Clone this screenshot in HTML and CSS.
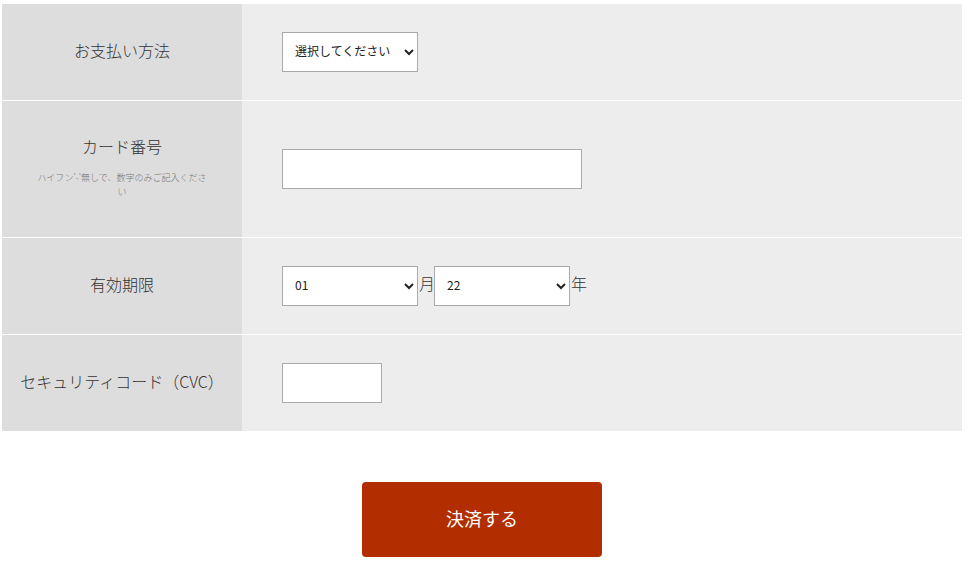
FILE: index.html
```html
<!DOCTYPE html>
<html lang="ja">
<head>
    <meta charset="UTF-8">
    <meta name="viewport" content="width=device-width, initial-scale=1.0">
    <title>お支払い情報</title>
    <link rel="stylesheet" href="styles.css">
</head>
<body>

    <div class="container">
        <div class="form-table">
            <div class="form-row">
                <div class="form-label">お支払い方法</div>
                <div class="form-field">
                    <select class="select-pay">
                        <option>選択してください</option>
                        <option>クレジットカード</option>
                    </select>
                </div>
            </div>
            <div class="form-row">
                <div class="form-label label-tall">
                    <div>カード番号</div>
                    <div class="note">ハイフン'-'無しで、数字のみご記入ください</div>
                </div>
                <div class="form-field">
                    <input type="text" class="input-card">
                </div>
            </div>
            <div class="form-row">
                <div class="form-label">有効期限</div>
                <div class="form-field">
                    <select class="select-date">
                        <option>01</option>
                        <option>02</option>
                        <option>03</option>
                    </select><span class="unit">月</span><select class="select-date">
                        <option>22</option>
                        <option>23</option>
                        <option>24</option>
                    </select><span class="unit">年</span>
                </div>
            </div>
            <div class="form-row">
                <div class="form-label">セキュリティコード（CVC）</div>
                <div class="form-field">
                    <input type="text" class="input-cvc">
                </div>
            </div>
        </div>

        <div class="submit-area">
            <button class="submit-button">決済する</button>
        </div>
    </div>

</body>
</html>
```

FILE: styles.css
```css
body {
    margin: 0;
    background-color: #fff;
    color: #333;
    font-family: "Noto Sans CJK JP", "Noto Sans", sans-serif;
    font-weight: 300;
}
.container {
    width: 960px;
    margin: 4px 2px 0;
}
.form-row {
    display: grid;
    grid-template-columns: 240px 1fr;
    min-height: 96px;
    border-bottom: 1px solid #fff;
}
.form-label {
    background-color: #dddddd;
    display: flex;
    flex-direction: column;
    justify-content: center;
    align-items: center;
    text-align: center;
    font-size: 16px;
    line-height: 24px;
    padding-bottom: 5px;
}
.label-tall {
    padding: 33px 0 38px;
}
.note {
    margin-top: 13px;
    padding: 0 32px;
    font-size: 9px;
    line-height: 14px;
    color: #777;
}
.form-field {
    background-color: #ededed;
    display: flex;
    align-items: center;
    padding-left: 40px;
}
select, input {
    box-sizing: border-box;
    height: 40px;
    background-color: #fff;
    border: 1px solid #aaa;
    border-radius: 0;
    margin: 0;
    font-family: "Noto Sans CJK JP", sans-serif;
    font-size: 12px;
    color: #222;
}
select {
    padding: 0 6px 4px 8px;
}
.select-pay {
    width: 136px;
}
.select-date {
    width: 136px;
}
.input-card {
    width: 300px;
}
.input-cvc {
    width: 100px;
}
.unit {
    font-size: 16px;
    margin: 0 0 0 1px;
    width: 15px;
    align-self: center;
    position: relative;
    top: -3px;
}
.submit-area {
    display: flex;
    justify-content: center;
    margin-top: 50px;
}
.submit-button {
    width: 240px;
    height: 75px;
    padding-bottom: 5px;
    background-color: #b22e00;
    color: #fff;
    border: none;
    border-radius: 4px;
    font-family: "Noto Sans CJK JP", sans-serif;
    font-weight: 400;
    font-size: 18px;
    cursor: pointer;
}
```
